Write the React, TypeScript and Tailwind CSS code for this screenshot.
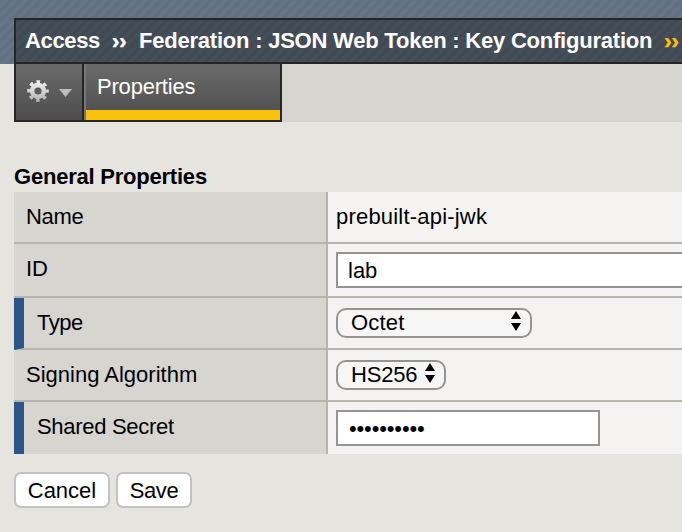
import React from "react";

function Gear() {
  return (
    <svg className="h-[24px] w-[24px]" viewBox="0 0 24 24">
      <defs>
        <linearGradient id="gear" gradientUnits="userSpaceOnUse" x1="0" y1="1" x2="0" y2="23">
          <stop offset="0" stopColor="#f6f6f6" />
          <stop offset="1" stopColor="#b0b0b0" />
        </linearGradient>
      </defs>
      <g transform="translate(0 1)" fill="none" stroke="#3c3c3c" opacity="0.35">
        <circle cx="12" cy="12" r="5.9" strokeWidth="4.6" />
        <circle cx="12" cy="12" r="9.2" strokeWidth="3.2" strokeDasharray="3.6 3.625" strokeDashoffset="1.8" />
      </g>
      <g fill="none" stroke="url(#gear)">
        <circle cx="12" cy="12" r="5.9" strokeWidth="4.6" />
        <circle cx="12" cy="12" r="9.2" strokeWidth="3.2" strokeDasharray="3.6 3.625" strokeDashoffset="1.8" />
      </g>
    </svg>
  );
}

function Arrows() {
  return (
    <svg className="h-[20px] w-[10px]" viewBox="0 0 10 20">
      <path d="M5 0L10 8H0zM0 12H10L5 20z" fill="#000" />
    </svg>
  );
}

function Row({ label, required, last, height, children }: {
  label: React.ReactNode;
  required?: boolean;
  last?: boolean;
  height: string;
  children: React.ReactNode;
}) {
  return (
    <div className={`flex ${height}`}>
      <div
        className={`w-[314px] shrink-0 border-r-2 border-[#b5b4ad] bg-[#d6d5d0] leading-[49px] ${last ? "" : "border-b-2"} ${
          required ? "border-l-[10px] border-l-[#2a5588] pl-[13px]" : "pl-3"
        }`}
      >
        {label}
      </div>
      <div className={`flex-1 border-[#b5b4ad] bg-[#f4f3f2] pl-2 ${last ? "" : "border-b-2"}`}>{children}</div>
    </div>
  );
}

export default function App() {
  return (
    <div className="h-[532px] w-[682px] overflow-hidden whitespace-nowrap bg-[#e5e4df] font-['Liberation_Sans',Arial,sans-serif] text-[22px] text-black">
      <header className="h-16 bg-[repeating-linear-gradient(135deg,#607082_0px,#607082_2px,#667688_3.5px,#667688_5px,#607082_7.07px)] pl-[14px] pt-[18px]">
        <div className="flex h-[46px] border-y-2 border-l-2 border-[#252525] bg-[repeating-linear-gradient(135deg,#414a53_0px,#414a53_2px,#454f59_3.5px,#454f59_5px,#414a53_7.07px)] pl-[9px] font-bold leading-[41px] text-white">
          <span className="w-[87px] tracking-[-0.35px]">Access</span>
          <span className="w-[27px] pt-px [-webkit-text-stroke:0.5px_#fff]">››</span>
          <span className="tracking-[-0.22px]">Federation : JSON Web Token : Key Configuration</span>
          <span className="ml-3 pt-px text-[#fac20a] [-webkit-text-stroke:0.5px_#fac20a]">››</span>
        </div>
      </header>
      <nav className="ml-[14px] flex h-[58px] bg-[#d6d5d0] text-white">
        <div className="flex w-[70px] border-x-2 border-b-2 border-[#252525] bg-linear-to-b from-[#6b6b6b] to-[#4d4d4d] pl-[10px] pt-[15px]">
          <Gear />
          <svg className="ml-[9px] mt-[10px] h-[8px] w-[13px]" viewBox="0 0 13 8">
            <path d="M0 0H13L6.5 8z" fill="#bcbcbc" />
          </svg>
        </div>
        <div className="w-[198px] border-b-2 border-r-2 border-[#252525] bg-linear-to-b from-[#6b6b6b] to-[#4d4d4d]">
          <div className="h-[56px] border-l-2 border-[#777]">
            <div className="h-[46px] pl-[11px] leading-[45px] tracking-[-0.2px]">Properties</div>
            <div className="h-[10px] bg-[#fac20a]" />
          </div>
        </div>
      </nav>
      <main className="pl-[14px] pt-[38px]">
        <h1 className="h-8 pt-px font-bold leading-[32px] tracking-[-0.22px]">General Properties</h1>
        <Row label={<span className="tracking-[-0.3px]">Name</span>} height="h-[52px]">
          <span className="leading-[49px] tracking-[0.2px]">prebuilt-api-jwk</span>
        </Row>
        <Row label="ID" height="h-[54px]">
          <div className="mt-2 h-9 border-2 border-r-0 border-[#949494] bg-white pl-[10px] leading-[33px]">lab</div>
        </Row>
        <Row label={<span className="tracking-[-0.5px]">Type</span>} required height="h-[52px]">
          <div className="mt-[10px] flex h-[30px] w-[196px] justify-between rounded-[10px] border-2 border-[#949494] bg-[#f6f6f6] pl-[13px] pr-[9px] pt-px leading-[23px]">
            <span className="tracking-[0.2px]">Octet</span>
            <Arrows />
          </div>
        </Row>
        <Row label="Signing Algorithm" height="h-[52px]">
          <div className="mt-[10px] flex h-[30px] w-[110px] justify-between rounded-[10px] border-2 border-[#949494] bg-[#f6f6f6] pl-[13px] pr-[9px] pt-px leading-[23px]">
            <span className="tracking-[-0.2px]">HS256</span>
            <Arrows />
          </div>
        </Row>
        <Row label={<span className="tracking-[-0.3px]">Shared Secret</span>} required last height="h-[52px]">
          <div className="mt-2 h-9 w-[264px] border-2 border-[#949494] bg-white pl-[11px] leading-[33px] tracking-[-0.14px]">••••••••••</div>
        </Row>
        <div className="mt-[18px] flex gap-[6px]">
          <button className="h-9 w-24 rounded-[7px] border-2 border-[#c2c2c2] bg-white leading-[33px]">Cancel</button>
          <button className="h-9 w-[76px] rounded-[7px] border-2 border-[#c2c2c2] bg-white leading-[33px] tracking-[-0.4px]">Save</button>
        </div>
      </main>
    </div>
  );
}
